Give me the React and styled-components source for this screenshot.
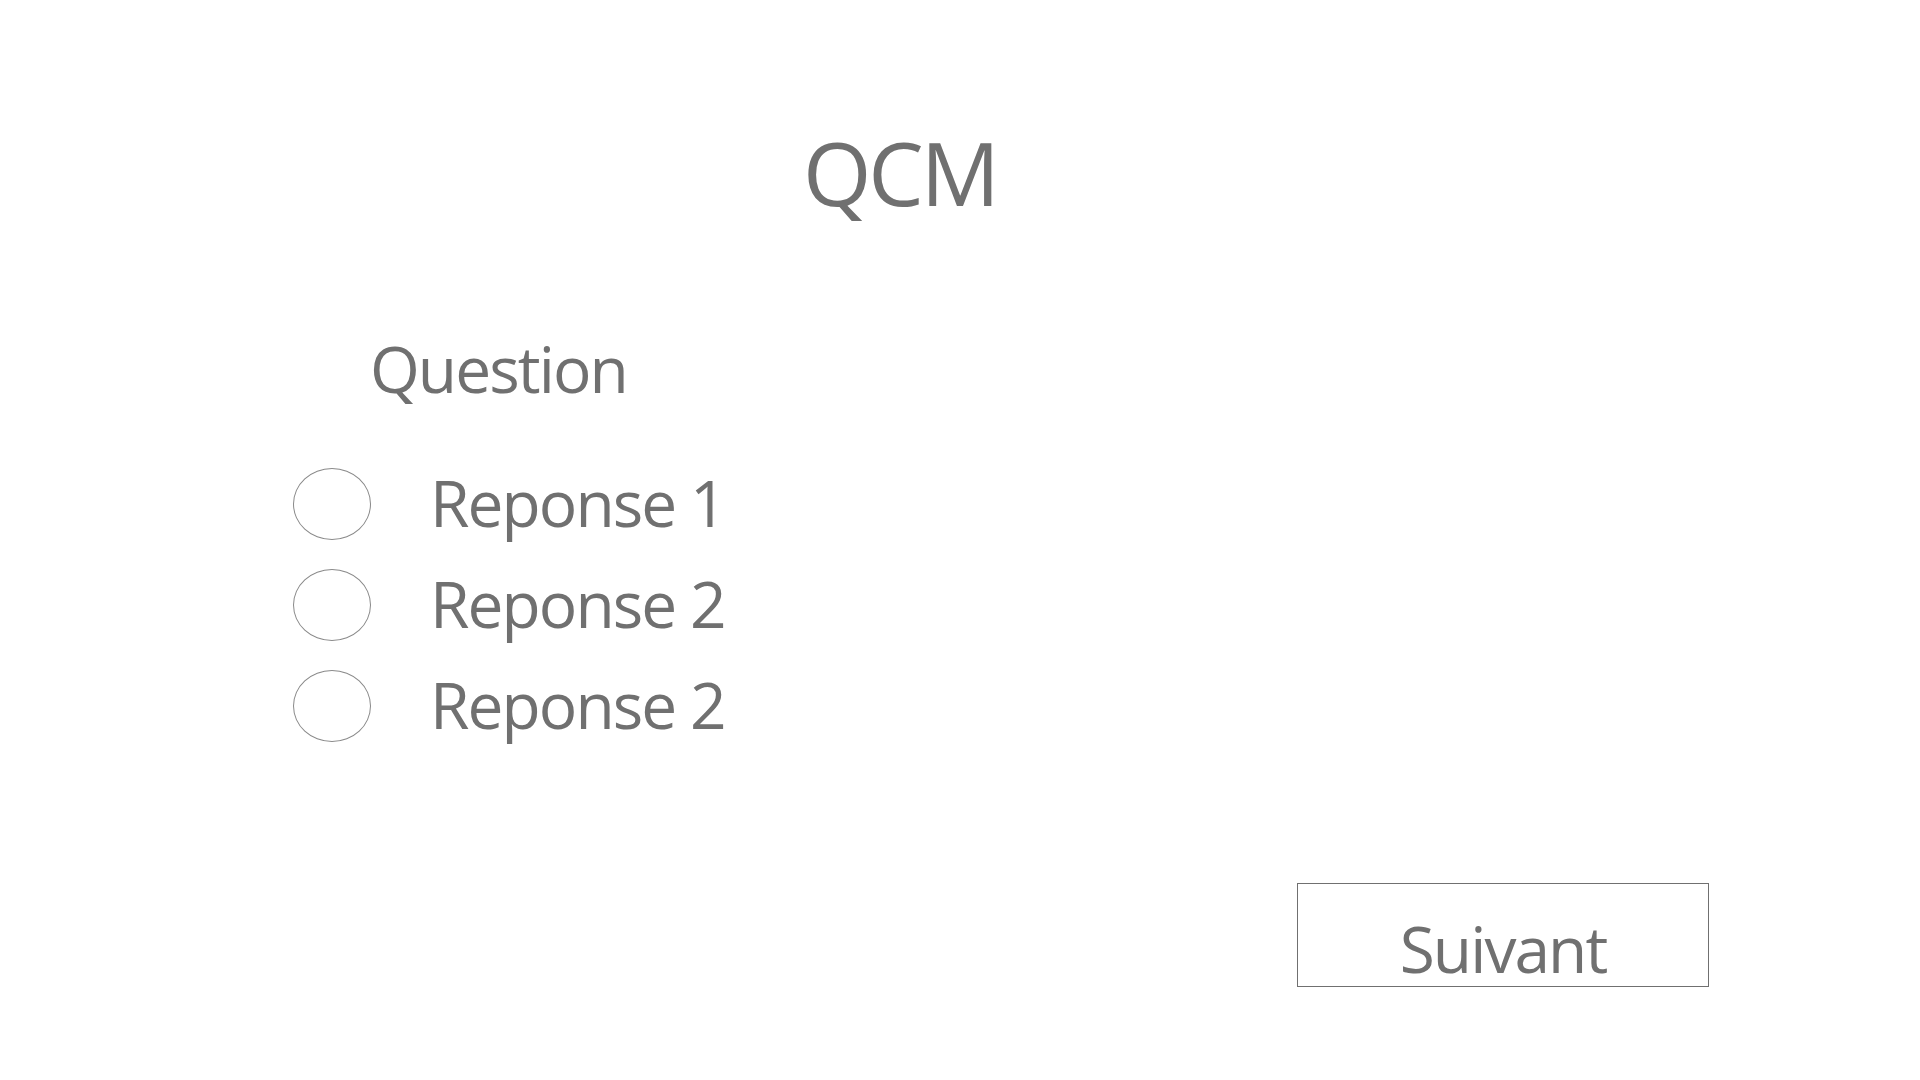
import React from 'react';
import styled, { createGlobalStyle } from 'styled-components';

const GlobalStyle = createGlobalStyle`
  html, body {
    margin: 0;
    padding: 0;
    background: #ffffff;
  }
  body {
    font-family: "Open Sans", "Noto Sans", sans-serif;
    color: #707070;
  }
`;

const Page = styled.div`
  width: 1920px;
  height: 1080px;
  box-sizing: border-box;
  padding-top: 128px;
  display: flex;
  flex-direction: column;
`;

const Title = styled.h1`
  margin: 0 0 0 803px;
  font-size: 88px;
  font-weight: 400;
  line-height: 1;
  letter-spacing: -0.035em;
  color: #707070;
`;

const Question = styled.h2`
  margin: 121px 0 0 370px;
  font-size: 64px;
  font-weight: 400;
  line-height: 1;
  letter-spacing: -0.03em;
  color: #707070;
`;

const Options = styled.ul`
  list-style: none;
  margin: 51px 0 0 293px;
  padding: 0;
  display: flex;
  flex-direction: column;
`;

const Option = styled.li`
  height: 101px;
  display: flex;
  align-items: center;
  gap: 59px;
`;

const Radio = styled.span`
  width: 78px;
  height: 72px;
  box-sizing: border-box;
  border: 1px solid #8a8a8a;
  border-radius: 50%;
  flex: none;
  margin-top: 2px;
`;

const Label = styled.span`
  font-size: 64px;
  line-height: 101px;
  letter-spacing: -0.03em;
  color: #707070;
`;

const Footer = styled.div`
  margin: 128px 0 0 1297px;
`;

const NextButton = styled.button`
  width: 412px;
  height: 104px;
  box-sizing: border-box;
  padding: 27px 0 0;
  border: 1px solid #707070;
  background: #ffffff;
  font-family: "Open Sans", "Noto Sans", sans-serif;
  font-size: 64px;
  line-height: 1;
  letter-spacing: -0.03em;
  color: #707070;
  text-align: center;
  cursor: pointer;
`;

const answers = ['Reponse 1', 'Reponse 2', 'Reponse 2'];

const App = () => {
  return (
    <>
      <GlobalStyle />
      <Page>
        <Title>QCM</Title>
        <Question>Question</Question>
        <Options>
          {answers.map((a, i) => (
            <Option key={i}>
              <Radio />
              <Label>{a}</Label>
            </Option>
          ))}
        </Options>
        <Footer>
          <NextButton>Suivant</NextButton>
        </Footer>
      </Page>
    </>
  );
};

export default App;
